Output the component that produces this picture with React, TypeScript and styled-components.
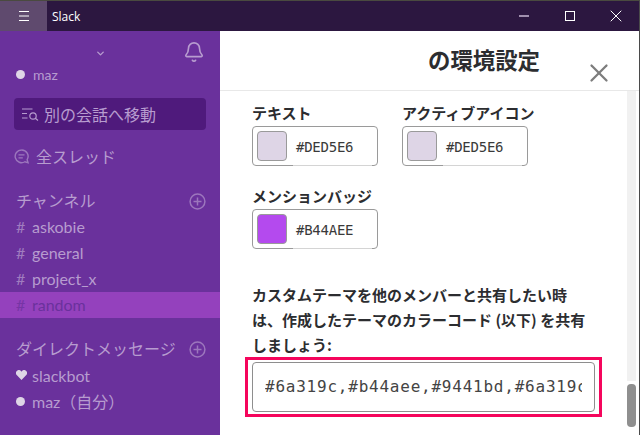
import styled, { createGlobalStyle } from "styled-components"
import { ChevronDown, Bell, X } from "lucide-react"

const GlobalStyle = createGlobalStyle`
  html, body {
    margin: 0;
    padding: 0;
    overflow: hidden;
    background: #fff;
  }
  * {
    box-sizing: border-box;
  }
`

const jp = `Lato, "Noto Sans CJK JP", sans-serif`

const Shell = styled.div`
  width: 640px;
  height: 435px;
  display: flex;
  flex-direction: column;
  overflow: hidden;
  font-family: ${jp};
  border-right: 1px solid #4a4a4a;
`

const TitleBar = styled.div`
  height: 31px;
  flex: none;
  display: flex;
  align-items: center;
  background: #2c1740;
  border-top: 1px solid #4a4a40;
  color: #fff;
`

const MenuButton = styled.div`
  width: 47px;
  height: 30px;
  display: flex;
  align-items: center;
  justify-content: center;
  background: #5f4a6e;
`

const AppName = styled.div`
  margin-left: 5px;
  flex: 1;
  font-family: "Open Sans", sans-serif;
  font-size: 12px;
`

const WinButton = styled.div`
  width: 46px;
  height: 30px;
  display: flex;
  align-items: center;
  justify-content: center;
`

const MinBar = styled.div`
  width: 10px;
  height: 2px;
  background: #a08fae;
`

const MaxSquare = styled.div`
  width: 10px;
  height: 10px;
  border: 1px solid #fff;
`

const Body = styled.div`
  flex: 1;
  display: flex;
  min-height: 0;
`

const Sidebar = styled.div`
  width: 220px;
  flex: none;
  display: flex;
  flex-direction: column;
  background: #6a319c;
  color: #b79ccf;
  padding-top: 11px;
`

const TeamRow = styled.div`
  height: 22px;
  display: flex;
  align-items: center;
  padding-left: 95px;
  position: relative;
`

const BellWrap = styled.div`
  position: absolute;
  left: 183px;
  top: -1px;
  height: 22px;
`

const UserRow = styled.div`
  height: 20px;
  display: flex;
  align-items: center;
  gap: 8px;
  padding-left: 16px;
  font-size: 14px;
`

const Dot = styled.span`
  width: 9px;
  height: 9px;
  border-radius: 50%;
  background: #ded5e6;
  flex: none;
`

const JumpBox = styled.div`
  margin: 14px 14px 0;
  height: 32px;
  border-radius: 4px;
  background: #4f1a7c;
  display: flex;
  align-items: center;
  gap: 5px;
  padding-left: 8px;
  font-size: 16px;
`

const ThreadRow = styled.div`
  margin-top: 14px;
  height: 24px;
  display: flex;
  align-items: center;
  gap: 7px;
  padding-left: 14px;
  font-size: 16px;
`

const SectionRow = styled.div<{ $top: number }>`
  margin-top: ${(p) => p.$top}px;
  margin-bottom: 1px;
  height: 26px;
  display: flex;
  align-items: center;
  justify-content: space-between;
  padding: 0 14px 0 16px;
  font-size: 16px;
`

const ChannelRow = styled.div<{ $active?: boolean; $dm?: boolean }>`
  height: 26px;
  display: flex;
  align-items: center;
  gap: 7px;
  padding: 0 0 ${(p) => (p.$dm ? 0 : 2)}px 16px;
  font-size: 16px;
  background: ${(p) => (p.$active ? "#9441bd" : "transparent")};
  color: ${(p) => (p.$active ? "#6a319c" : "inherit")};
`

const Hash = styled.span`
  width: 9px;
  font-size: 16px;
  opacity: 0.7;
`

const HeartIcon = styled.svg`
  margin-right: -2px;
  flex: none;
`

const PlusIcon = styled.svg`
  margin-top: 2px;
  flex: none;
`

const Main = styled.div`
  flex: 1;
  min-width: 0;
  display: flex;
  flex-direction: column;
  background: #fff;
  position: relative;
`

const Header = styled.div`
  height: 60px;
  flex: none;
  border-bottom: 1px solid #e8e8e8;
  display: flex;
  align-items: center;
  padding: 0 0 4px 208px;
  color: #2c2d30;
  font-size: 22.4px;
  font-weight: 700;
  font-family: "Noto Sans CJK JP", sans-serif;
`

const CloseButton = styled.div`
  position: absolute;
  left: 364px;
  top: 27px;
  color: #7d7d7d;
`

const Content = styled.div`
  flex: 1;
  min-height: 0;
  padding: 11px 0 0 32px;
  overflow: hidden;
  position: relative;
`

const SwatchGrid = styled.div`
  display: grid;
  grid-template-columns: 126px 126px;
  column-gap: 24px;
  row-gap: 19px;
`

const SwatchBlock = styled.div`
  display: flex;
  flex-direction: column;
  width: 126px;
`

const SwatchLabel = styled.div`
  height: 20px;
  line-height: 22px;
  font-size: 15px;
  font-weight: 700;
  color: #2c2d30;
  white-space: nowrap;
  font-family: "Noto Sans CJK JP", sans-serif;
`

const SwatchBox = styled.div`
  margin-top: 4px;
  height: 40px;
  border: 1px solid #9a9a9a;
  border-radius: 4px;
  display: flex;
  align-items: center;
  padding-left: 4px;
  gap: 9px;
  position: relative;

  &::after {
    content: "";
    position: absolute;
    left: 40px;
    right: 5px;
    bottom: -1px;
    height: 1px;
    background: #d4d4d4;
  }
`

const Chip = styled.span<{ $color: string }>`
  width: 30px;
  height: 30px;
  border-radius: 4px;
  border: 1px solid #9a9a9a;
  background: ${(p) => p.$color};
  flex: none;
`

const HexText = styled.span`
  font-family: "DejaVu Sans Mono", monospace;
  font-size: 14px;
  margin-top: 2px;
  color: #3a3a3a;
  letter-spacing: -0.25px;
`

const ShareText = styled.p`
  margin: 33px 0 0 0;
  width: 335px;
  font-size: 15px;
  line-height: 25px;
  font-weight: 700;
  color: #2c2d30;
  font-family: "Noto Sans CJK JP", sans-serif;
`

const Highlight = styled.div`
  margin: 0 0 0 -7px;
  width: 357px;
  height: 60px;
  border: 3px solid #f5055c;
  padding: 2px 4px;
`

const CodeInput = styled.div`
  height: 50px;
  border: 1px solid #8e8e8e;
  border-radius: 4px;
  padding: 0 12px 2px;
  display: flex;
  align-items: center;
  white-space: nowrap;
  font-family: "DejaVu Sans Mono", monospace;
  font-size: 16px;
  letter-spacing: 0.77px;
  color: #444;
`

const CodeClip = styled.span`
  display: block;
  overflow: hidden;
`

const Track = styled.div`
  position: absolute;
  left: 407px;
  top: 0;
  bottom: 8px;
  width: 9px;
  display: flex;
  flex-direction: column;
  gap: 3px;
`

const TrackFill = styled.div`
  flex: 1;
  background: #f1f1f1;
`

const Thumb = styled.div`
  height: 43px;
  flex: none;
  border-radius: 4px;
  background: #8f8f8f;
`

const channels = ["askobie", "general", "project_x"]

function MenuIcon() {
  return (
    <svg width="10" height="10" viewBox="0 0 10 10" stroke="#fff" strokeWidth="1">
      <path d="M0 0.5h10M0 5h10M0 9.5h10" />
    </svg>
  )
}

function PlusCircle() {
  return (
    <PlusIcon width="17" height="17" viewBox="0 0 17 17" fill="none" stroke="#9c76bd" strokeWidth="1.5">
      <circle cx="8.5" cy="8.5" r="7.4" />
      <path d="M8.5 4.5v8M4.5 8.5h8" />
    </PlusIcon>
  )
}

function JumpIcon() {
  return (
    <svg width="17" height="13" viewBox="0 0 17 13" fill="none" stroke="#b79ccf" strokeWidth="1.2">
      <path d="M0 1h10.5M0 5.5h5M0 10h5.5" />
      <circle cx="11" cy="8" r="3.2" />
      <path d="M13.3 10.3l2.7 2.2" />
    </svg>
  )
}

function ThreadIcon() {
  return (
    <svg width="15" height="15" viewBox="0 0 16 16" fill="none" stroke="#9c76bd" strokeWidth="1.5">
      <path d="M8 1a6.8 6.8 0 1 0 3.6 12.6l3.4 1-1-3.2A6.8 6.8 0 0 0 8 1z" />
      <path d="M4.8 6.3h6.4M4.8 9.5h4.6" />
    </svg>
  )
}

function Heart() {
  return (
    <HeartIcon width="11" height="10" viewBox="0 0 11 10" fill="#ded5e6">
      <path d="M5.5 10L.7 5.1A2.9 2.9 0 0 1 5 1.1l.5.6.5-.6a2.9 2.9 0 0 1 4.3 4z" />
    </HeartIcon>
  )
}

export default function App() {
  return (
    <>
      <GlobalStyle />
      <Shell>
        <TitleBar>
          <MenuButton>
            <MenuIcon />
          </MenuButton>
          <AppName>Slack</AppName>
          <WinButton>
            <MinBar />
          </WinButton>
          <WinButton>
            <MaxSquare />
          </WinButton>
          <WinButton>
            <X size={20} strokeWidth={1.2} />
          </WinButton>
        </TitleBar>
        <Body>
          <Sidebar>
            <TeamRow>
              <ChevronDown size={11} strokeWidth={3} />
              <BellWrap>
                <Bell size={22} strokeWidth={1.8} />
              </BellWrap>
            </TeamRow>
            <UserRow>
              <Dot />
              maz
            </UserRow>
            <JumpBox>
              <JumpIcon />
              別の会話へ移動
            </JumpBox>
            <ThreadRow>
              <ThreadIcon />
              全スレッド
            </ThreadRow>
            <SectionRow $top={19}>
              チャンネル
              <PlusCircle />
            </SectionRow>
            {channels.map((name) => (
              <ChannelRow key={name}>
                <Hash>#</Hash>
                {name}
              </ChannelRow>
            ))}
            <ChannelRow $active>
              <Hash>#</Hash>
              random
            </ChannelRow>
            <SectionRow $top={17}>
              ダイレクトメッセージ
              <PlusCircle />
            </SectionRow>
            <ChannelRow $dm>
              <Heart />
              slackbot
            </ChannelRow>
            <ChannelRow $dm>
              <Dot />
              maz（自分）
            </ChannelRow>
          </Sidebar>
          <Main>
            <Header>の環境設定</Header>
            <CloseButton>
              <X size={30} strokeWidth={1.8} />
            </CloseButton>
            <Content>
              <SwatchGrid>
                <SwatchBlock>
                  <SwatchLabel>テキスト</SwatchLabel>
                  <SwatchBox>
                    <Chip $color="#ded5e6" />
                    <HexText>#DED5E6</HexText>
                  </SwatchBox>
                </SwatchBlock>
                <SwatchBlock>
                  <SwatchLabel>アクティブアイコン</SwatchLabel>
                  <SwatchBox>
                    <Chip $color="#ded5e6" />
                    <HexText>#DED5E6</HexText>
                  </SwatchBox>
                </SwatchBlock>
                <SwatchBlock>
                  <SwatchLabel>メンションバッジ</SwatchLabel>
                  <SwatchBox>
                    <Chip $color="#b44aee" />
                    <HexText>#B44AEE</HexText>
                  </SwatchBox>
                </SwatchBlock>
              </SwatchGrid>
              <ShareText>
                カスタムテーマを他のメンバーと共有したい時は、作成したテーマのカラーコード (以下) を共有しましょう:
              </ShareText>
              <Highlight>
                <CodeInput>
                  <CodeClip>#6a319c,#b44aee,#9441bd,#6a319c,#9441bd,#ded5e6</CodeClip>
                </CodeInput>
              </Highlight>
              <Track>
                <TrackFill />
                <Thumb />
              </Track>
            </Content>
          </Main>
        </Body>
      </Shell>
    </>
  )
}
